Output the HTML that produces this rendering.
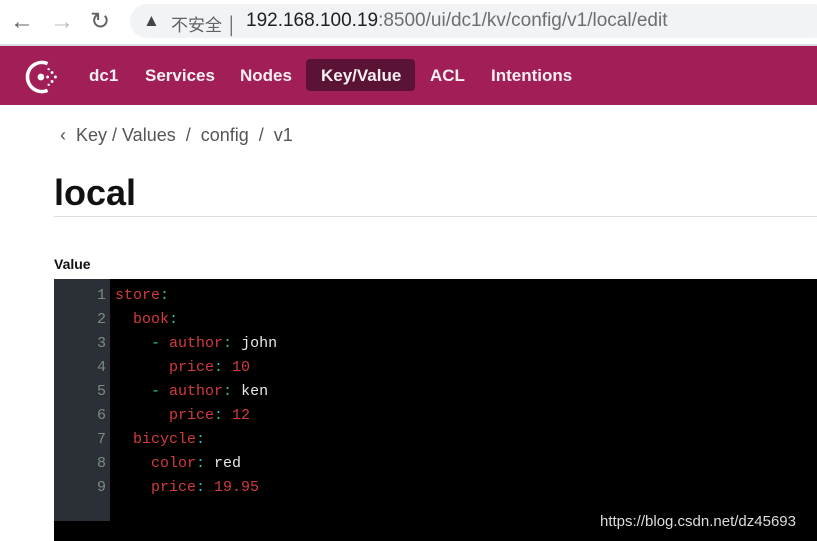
<!DOCTYPE html><html><head><meta charset="utf-8"><style>
body{margin:0;width:817px;height:541px;overflow:hidden;background:#fff;font-family:"Liberation Sans","Noto Sans CJK SC",sans-serif;position:relative}
.abs{position:absolute}
.url{left:130px;top:4px;width:700px;height:34px;background:#f1f3f4;border-radius:17px}
.nav{left:0;top:46px;width:817px;height:59px;background:#a11f56}
.ni{position:absolute;top:20px;color:#fff;font-size:17px;font-weight:bold;opacity:.93}
.code{left:54px;top:279px;width:763px;height:262px;background:#000}
.gut{left:54px;top:279px;width:56px;height:242px;background:#2b3036}
.ln{position:absolute;left:54px;width:52px;text-align:right;color:#7b8a8a;font:15px "Liberation Mono",monospace}
.cl{position:absolute;left:115px;font:15px "Liberation Mono",monospace;color:#d33b3b;white-space:pre}
.p{color:#2ec2a0}.v{color:#e8e8e8}
</style></head><body>
<div class="abs" style="top:44px;left:0;width:817px;height:2px;background:#dadce0"></div>
<div class="abs" style="left:10px;top:8px;font-size:24px;color:#5f6368">←</div>
<div class="abs" style="left:50px;top:8px;font-size:24px;color:#bbb">→</div>
<div class="abs" style="left:90px;top:7px;font-size:24px;color:#5f6368">↻</div>
<div class="abs url"></div>
<div class="abs" style="left:143px;top:11px;font-size:17px;color:#444">▲</div>
<div class="abs" style="left:171px;top:11px;font-size:17px;color:#5f6368">不安全 │</div>
<div class="abs" style="left:246px;top:10px;font-size:19px;color:#202124">192.168.100.19<span style="color:#6b6f73">:8500/ui/dc1/kv/config/v1/local/edit</span></div>
<div class="abs nav">
<svg class="abs" style="left:23px;top:12px" width="38" height="38" viewBox="0 0 34 34"><path d="M22 5A13 13 0 1 0 22 29" stroke="#fff" stroke-width="3.2" fill="none"/><circle cx="16" cy="17" r="3" fill="#fff"/><circle cx="22" cy="17" r="1.3" fill="#fff"/><circle cx="26" cy="13" r="1.3" fill="#fff"/><circle cx="26" cy="21" r="1.3" fill="#fff"/><circle cx="29" cy="17" r="1.3" fill="#fff"/><circle cx="23" cy="10" r="1.1" fill="#fff"/><circle cx="23" cy="24" r="1.1" fill="#fff"/></svg>
<div class="ni" style="left:89px">dc1</div>
<div class="ni" style="left:145px">Services</div>
<div class="ni" style="left:240px">Nodes</div>
<div class="abs" style="left:306px;top:13px;width:109px;height:32px;background:#5b1335;border-radius:4px"></div>
<div class="ni" style="left:321px">Key/Value</div>
<div class="ni" style="left:430px">ACL</div>
<div class="ni" style="left:491px">Intentions</div>
</div>
<div class="abs" style="left:60px;top:125px;font-size:18px;color:#555">‹ &nbsp;Key / Values &nbsp;/ &nbsp;config &nbsp;/ &nbsp;v1</div>
<div class="abs" style="left:54px;top:172px;font-size:36px;font-weight:bold;color:#111">local</div>
<div class="abs" style="left:54px;top:216px;width:763px;height:1px;background:#ddd"></div>
<div class="abs" style="left:54px;top:256px;font-size:14px;font-weight:bold;color:#111">Value</div>
<div class="abs code"></div><div class="abs gut"></div>
<div class="ln" style="top:287px">1</div><div class="ln" style="top:311px">2</div><div class="ln" style="top:335px">3</div><div class="ln" style="top:359px">4</div><div class="ln" style="top:383px">5</div><div class="ln" style="top:407px">6</div><div class="ln" style="top:431px">7</div><div class="ln" style="top:455px">8</div><div class="ln" style="top:479px">9</div>
<div class="cl" style="top:287px">store<span class="p">:</span></div>
<div class="cl" style="top:311px">  book<span class="p">:</span></div>
<div class="cl" style="top:335px">    <span class="p">-</span> author<span class="p">:</span> <span class="v">john</span></div>
<div class="cl" style="top:359px">      price<span class="p">:</span> 10</div>
<div class="cl" style="top:383px">    <span class="p">-</span> author<span class="p">:</span> <span class="v">ken</span></div>
<div class="cl" style="top:407px">      price<span class="p">:</span> 12</div>
<div class="cl" style="top:431px">  bicycle<span class="p">:</span></div>
<div class="cl" style="top:455px">    color<span class="p">:</span> <span class="v">red</span></div>
<div class="cl" style="top:479px">    price<span class="p">:</span> 19.95</div>
<div class="abs" style="left:600px;top:513px;font-size:15px;color:#ddd">https://blog.csdn.net/dz45693</div>
</body></html>
